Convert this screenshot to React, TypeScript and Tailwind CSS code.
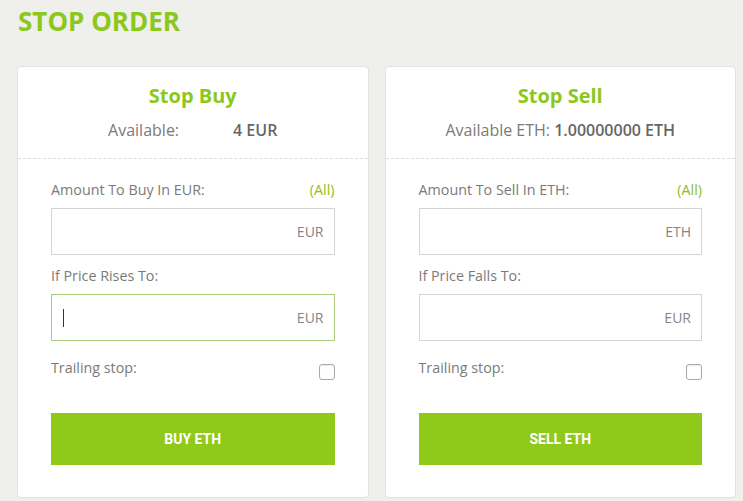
import React from "react";

function Field({ label, all, unit, focused }: { label: string; all?: boolean; unit: string; focused?: boolean }) {
  return (
    <div>
      <div className="flex justify-between text-[14.3px] leading-[18px] text-[#7a7a7a]">
        <span>{label}</span>
        {all && <span className="text-[#8cc21a]">(All)</span>}
      </div>
      <div
        className={`mt-[9px] h-[47px] border flex items-center justify-between pl-[11px] pr-[10px] bg-white ${
          focused ? "border-[#aacb7e]" : "border-[#d4d4d4]"
        }`}
      >
        <span className="flex items-center">
          {focused && <span className="block w-px h-[18px] bg-[#333]" />}
        </span>
        <span className="text-[14px] text-[#858585]">{unit}</span>
      </div>
    </div>
  );
}

function Card({
  title,
  available,
  amountLabel,
  amountUnit,
  priceLabel,
  button,
  focused,
}: {
  title: string;
  available: React.ReactNode;
  amountLabel: string;
  amountUnit: string;
  priceLabel: string;
  button: string;
  focused?: boolean;
}) {
  return (
    <div className="flex-1 bg-white border border-[#e3e3de] rounded-[4px]">
      <div className="pt-[16px] pb-[18px] text-center border-b border-dashed border-[#dcdcdc]">
        <div className="text-[20px] leading-[26px] font-bold text-[#8cc71b]">{title}</div>
        <div className="mt-[11px] text-[16px] leading-[20px] text-[#7a7a7a]">{available}</div>
      </div>
      <div className="px-[33px] pt-[22px] pb-[32px]">
        <Field label={amountLabel} all unit={amountUnit} />
        <div className="mt-[12px]">
          <Field label={priceLabel} unit="EUR" focused={focused} />
        </div>
        <div className="mt-[18px] flex justify-between items-start">
          <span className="text-[14.3px] leading-[18px] text-[#7a7a7a]">Trailing stop:</span>
          <span className="mt-[5px] block w-[16px] h-[16px] rounded-[3px] border border-[#a9a9a9] bg-white shadow-[inset_0_1px_1px_rgba(0,0,0,0.08)]" />
        </div>
        <button className="mt-[33px] w-full h-[52px] bg-[#8fc91a] text-white text-[14px] font-bold uppercase font-['Roboto',sans-serif]">
          {button}
        </button>
      </div>
    </div>
  );
}

export default function App() {
  return (
    <div className="w-[743px] h-[501px] overflow-hidden bg-[#efefeb] font-['Open_Sans',sans-serif]">
      <div className="pl-[18px] pt-[3px] text-[26px] leading-[36px] font-bold text-[#8cc71b]">STOP ORDER</div>
      <div className="flex gap-[16px] pl-[17px] pr-[7px] mt-[27px]">
        <Card
          title="Stop Buy"
          available={
            <>
              Available:<span className="inline-block w-[54px]" />
              <span className="font-semibold text-[#666]">4 EUR</span>
            </>
          }
          amountLabel="Amount To Buy In EUR:"
          amountUnit="EUR"
          priceLabel="If Price Rises To:"
          button="Buy ETH"
          focused
        />
        <Card
          title="Stop Sell"
          available={
            <>
              Available ETH: <span className="font-semibold text-[#666]">1.00000000 ETH</span>
            </>
          }
          amountLabel="Amount To Sell In ETH:"
          amountUnit="ETH"
          priceLabel="If Price Falls To:"
          button="Sell ETH"
        />
      </div>
    </div>
  );
}
